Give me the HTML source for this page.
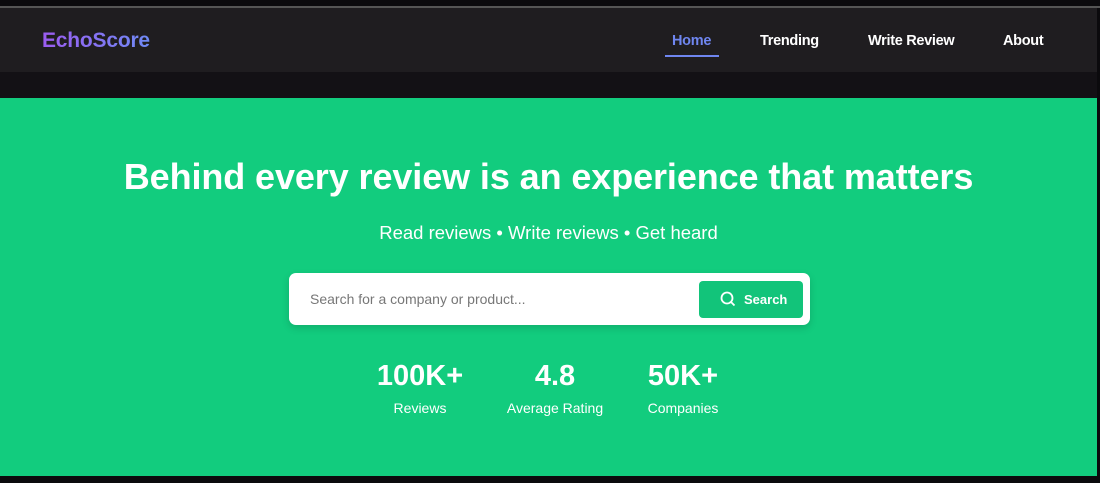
<!DOCTYPE html>
<html><head><style>
*{margin:0;padding:0;box-sizing:border-box}
body{width:1100px;height:483px;overflow:hidden;background:#0b0a0d;font-family:"Liberation Sans",sans-serif;position:relative}
.topline{position:absolute;top:6px;left:0;width:1100px;height:2px;background:#555}
.nav{position:absolute;top:8px;left:0;width:1097px;height:64px;background:#1f1d20}
.under{position:absolute;top:72px;left:0;width:1097px;height:26px;background:#131115}
.logo{position:absolute;left:42px;top:21px;font-size:21px;font-weight:bold;letter-spacing:-0.2px;background:linear-gradient(90deg,#9b5cf0,#6f8af5);-webkit-background-clip:text;color:transparent}
.nav a{position:absolute;top:25px;font-size:14.5px;font-weight:bold;color:#fff;text-decoration:none;letter-spacing:-0.3px}
.hero{position:absolute;top:98px;left:0;width:1097px;height:378px;background:#12cc7e;text-align:center;color:#fff}
h1{position:absolute;top:58px;left:0;width:100%;font-size:36px;font-weight:bold;letter-spacing:-0.1px}
.sub{position:absolute;top:124px;left:0;width:100%;font-size:18.5px}
.box{position:absolute;left:289px;top:175px;width:521px;height:52px;background:#fff;border-radius:7px;box-shadow:0 3px 8px rgba(0,0,0,.15)}
.ph{position:absolute;left:21px;top:18px;font-size:14px;color:#777}
.btn{position:absolute;left:410px;top:8px;width:104px;height:37px;background:#12c47a;border-radius:4px;color:#fff;font-size:13px;font-weight:bold}
.btn span{position:absolute;left:45px;top:11px}
.btn svg{position:absolute;left:21px;top:10px}
.stat{position:absolute;top:262px;text-align:center;width:140px}
.stat b{display:block;font-size:29px}
.stat i{display:block;font-style:normal;font-size:14px;margin-top:7px}
</style></head><body>
<div class="topline"></div>
<div class="nav">
<div class="logo">EchoScore</div>
<a style="left:672px;color:#6f86f0">Home</a>
<div style="position:absolute;left:665px;top:47px;width:54px;height:2px;background:#6f86f0"></div>
<a style="left:760px">Trending</a>
<a style="left:868px">Write Review</a>
<a style="left:1003px">About</a>
</div>
<div class="under"></div>
<div class="hero">
<h1>Behind every review is an experience that matters</h1>
<div class="sub">Read reviews • Write reviews • Get heard</div>
<div class="box"><div class="ph">Search for a company or product...</div>
<div class="btn"><svg width="16" height="16" viewBox="0 0 16 16" fill="none" stroke="#fff" stroke-width="1.8"><circle cx="7" cy="7" r="5.5"/><path d="M11 11l3.5 3.5"/></svg><span>Search</span></div></div>
<div class="stat" style="left:350px"><b>100K+</b><i>Reviews</i></div>
<div class="stat" style="left:485px"><b>4.8</b><i>Average Rating</i></div>
<div class="stat" style="left:613px"><b>50K+</b><i>Companies</i></div>
</div>
</body></html>
